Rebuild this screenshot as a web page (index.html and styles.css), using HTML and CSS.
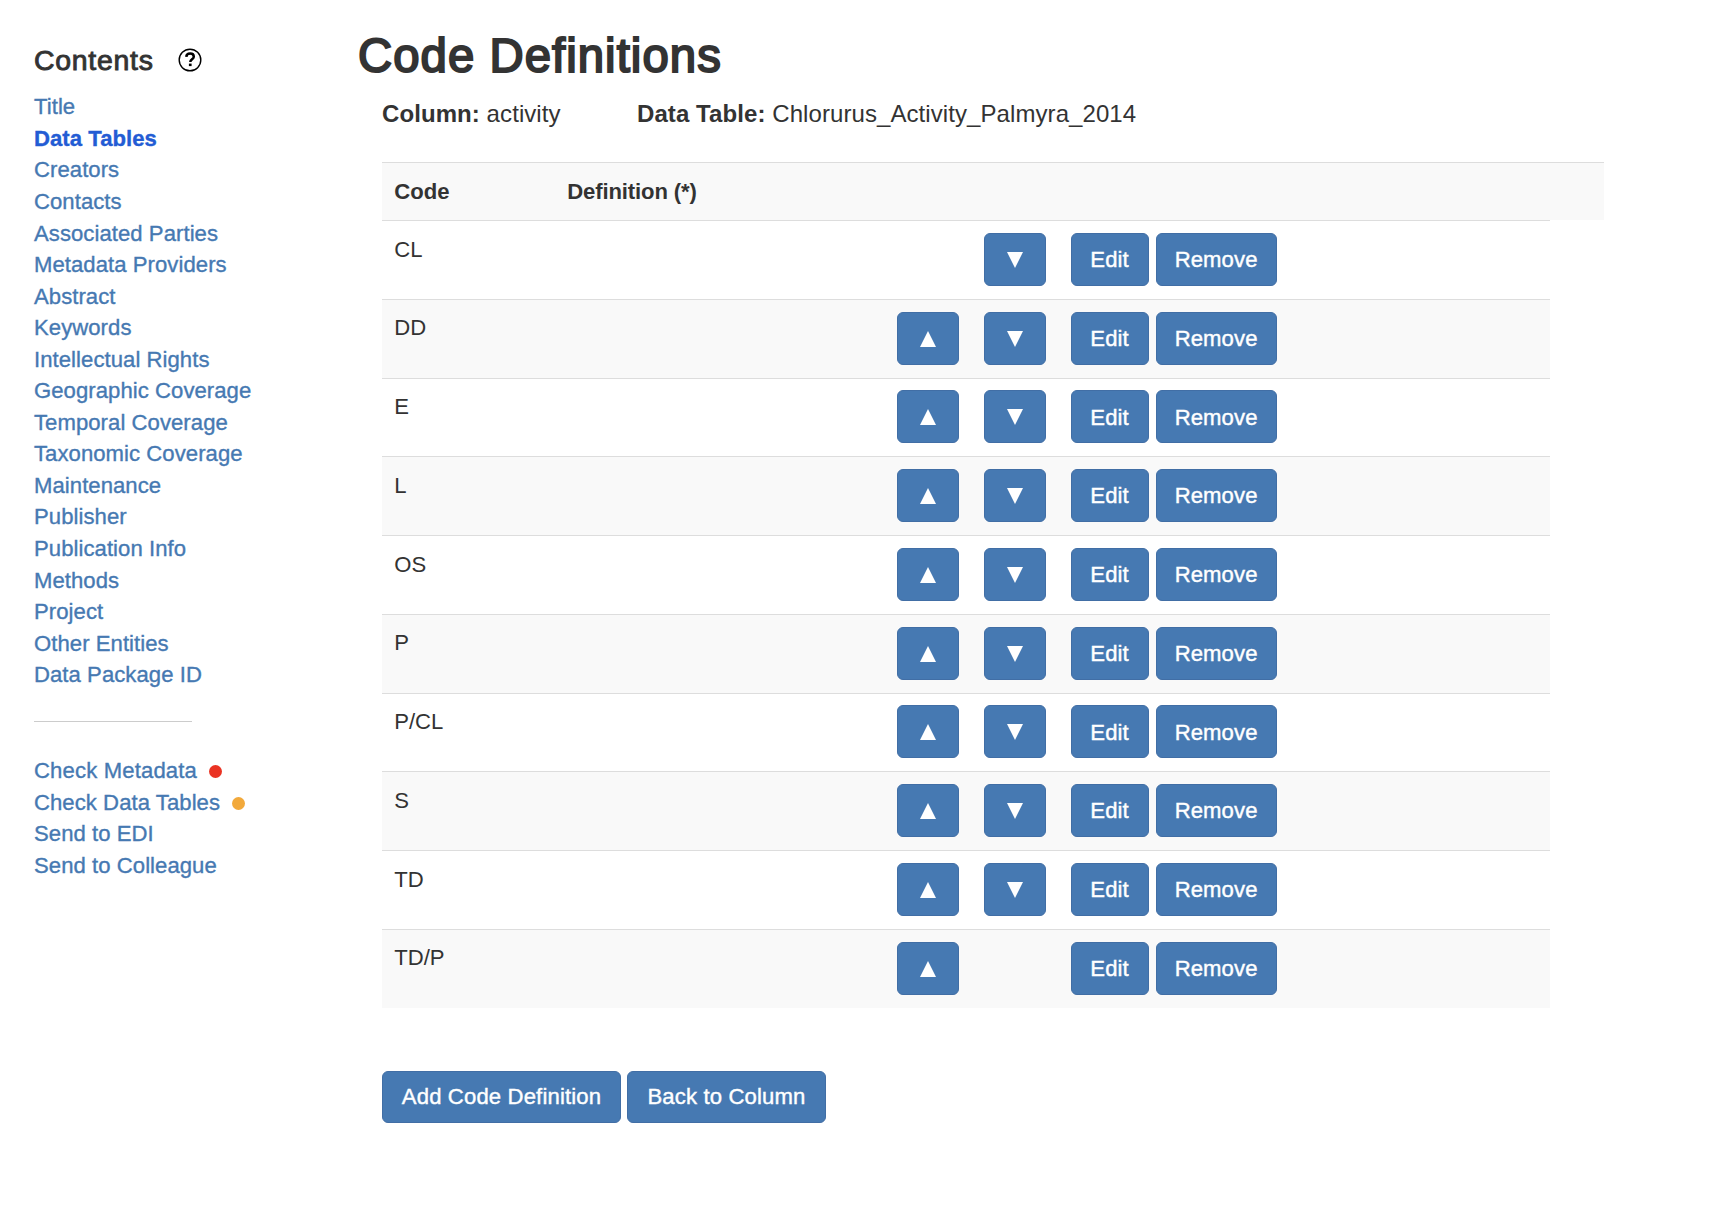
FILE: index.html
```html
<!DOCTYPE html>
<html lang="en">
<head>
<meta charset="utf-8">
<title>Code Definitions</title>
<link rel="stylesheet" href="styles.css">
</head>
<body>
<div class="page">
  <aside class="sidebar">
    <div class="contents-head">
      <h4>Contents</h4>
      <svg class="help" viewBox="0 0 24 24" width="24" height="24"><circle cx="12" cy="12" r="10.8" fill="none" stroke="#000" stroke-width="1.4"/><path d="M8.300 8.900C8.400 6.600 9.900 5.500 12.100 5.500s3.700 1.200 3.700 3.200c0 2.600-3.500 2.700-3.500 5.400" fill="none" stroke="#000" stroke-width="2.500"/><rect x="10.900" y="15.600" width="2.700" height="2.500"/></svg>
    </div>
    <nav class="links">
      <a>Title</a><a class="active">Data Tables</a><a>Creators</a><a>Contacts</a><a>Associated Parties</a><a>Metadata Providers</a><a>Abstract</a><a>Keywords</a><a>Intellectual Rights</a><a>Geographic Coverage</a><a>Temporal Coverage</a><a>Taxonomic Coverage</a><a>Maintenance</a><a>Publisher</a><a>Publication Info</a><a>Methods</a><a>Project</a><a>Other Entities</a><a>Data Package ID</a>
    </nav>
    <hr>
    <nav class="links">
      <a><span class="check">Check Metadata</span><i class="dot red"></i></a><a>Check Data Tables<i class="dot orange"></i></a><a>Send to EDI</a><a>Send to Colleague</a>
    </nav>
  </aside>
  <main class="main">
    <h1>Code Definitions</h1>
    <div class="meta"><span class="column"><b>Column:</b> activity</span><span class="table-name"><b>Data Table:</b> Chlorurus_Activity_Palmyra_2014</span></div>
    <div class="table">
      <div class="thead"><span>Code</span><span class="def">Definition (*)</span></div>
      <div id="rows"></div>
    </div>
    <div class="actions"><a class="btn add">Add Code Definition</a><a class="btn back">Back to Column</a></div>
  </main>
</div>
<script src="rows.js"></script>
</body>
</html>
```
FILE: rows.js
```js
const codes = ["CL", "DD", "E", "L", "OS", "P", "P/CL", "S", "TD", "TD/P"];
const arrow = (points) =>
  `<a class="btn arrow"><svg viewBox="0 0 16 16" width="16" height="16"><polygon points="${points}" fill="#fff"/></svg></a>`;
const up = arrow("8,0 16,16 0,16");
const down = arrow("0,0 16,0 8,16");

document.getElementById("rows").innerHTML = codes.map((code, i) => `
  <div class="row">
    <span class="code">${code}</span>
    <span></span>
    <span>${i > 0 ? up : ""}</span>
    <span>${i < codes.length - 1 ? down : ""}</span>
    <span class="pair"><a class="btn edit">Edit</a><a class="btn remove">Remove</a></span>
  </div>`).join("");
```
FILE: styles.css
```css
* { box-sizing: border-box; }
body {
  margin: 0;
  background: #fff;
  color: #333;
  font-family: "Liberation Sans", Arial, sans-serif;
  font-size: 22.1px;
  line-height: 31.56px;
}
.page { display: flex; min-height: 1210px; }
.sidebar { width: 358px; padding: 45px 0 0 34px; }
.contents-head { display: flex; align-items: center; height: 31.2px; gap: 24.8px; margin-bottom: 15.2px; }
h4 { margin: 0; font-size: 28.4px; font-weight: 400; letter-spacing: .75px; -webkit-text-stroke: .9px #333; }
.help { display: block; margin-top: -2px; }
.links { display: flex; flex-direction: column; color: #4679b2; letter-spacing: .06px; -webkit-text-stroke: .35px currentColor; }
.links a { display: flex; align-items: center; height: 31.56px; white-space: nowrap; }
.links .active { color: #235cd4; font-weight: 700; letter-spacing: .05px; }
hr { width: 158px; height: 1px; border: 0; margin: 30.4px 0 32.8px; background: #ccc; }
.check { letter-spacing: .15px; }
.dot { width: 13px; height: 13px; border-radius: 50%; margin-left: 12px; margin-top: 2px; }
.red { background: #ea3323; }
.orange { background: #f2a93b; margin-left: 11.500px; }
.main { flex: 1; padding-top: 29.6px; }
h1 { margin: 0; font-size: 47.3px; line-height: 52px; font-weight: 400; letter-spacing: 1.05px; -webkit-text-stroke: 2px #333; }
.meta { display: flex; margin: 15.4px 0 0 24px; font-size: 24px; line-height: 34.3px; height: 34.3px; letter-spacing: .08px; white-space: nowrap; }
.column { width: 255px; }
.table { margin: 30.7px 0 0 24px; width: 1168px; }
.thead { display: flex; width: 1222px; height: 58.2px; padding: 13px 0 0 12.2px; border-top: 1px solid #ddd; background: #f9f9f9; font-weight: 700; }
.thead span { width: 173px; }
.thead .def { letter-spacing: -.12px; }
.row { display: grid; grid-template-columns: 173px 329px 87px 87px 1fr; height: 78.75px; border-top: 1px solid #ddd; padding: 11.8px 0 0 12.6px; }
.row:nth-child(even) { background: #f9f9f9; }
.code { padding-top: .7px; margin-left: -.4px; }
.pair { display: flex; gap: 7px; }
.btn { display: flex; align-items: center; justify-content: center; height: 52.8px; border: 1px solid #416ea5; border-radius: 6px; background: #4679b2; color: #fff; letter-spacing: .1px; white-space: nowrap; -webkit-text-stroke: .4px #fff; padding-top: 1px; }
.arrow { width: 62px; }
.edit { width: 78px; }
.remove { width: 121px; }
.actions { display: flex; gap: 6px; margin: 63px 0 0 24px; }
.actions .btn { height: 52px; letter-spacing: .15px; }
.add { width: 239px; }
.back { width: 199px; }
```
